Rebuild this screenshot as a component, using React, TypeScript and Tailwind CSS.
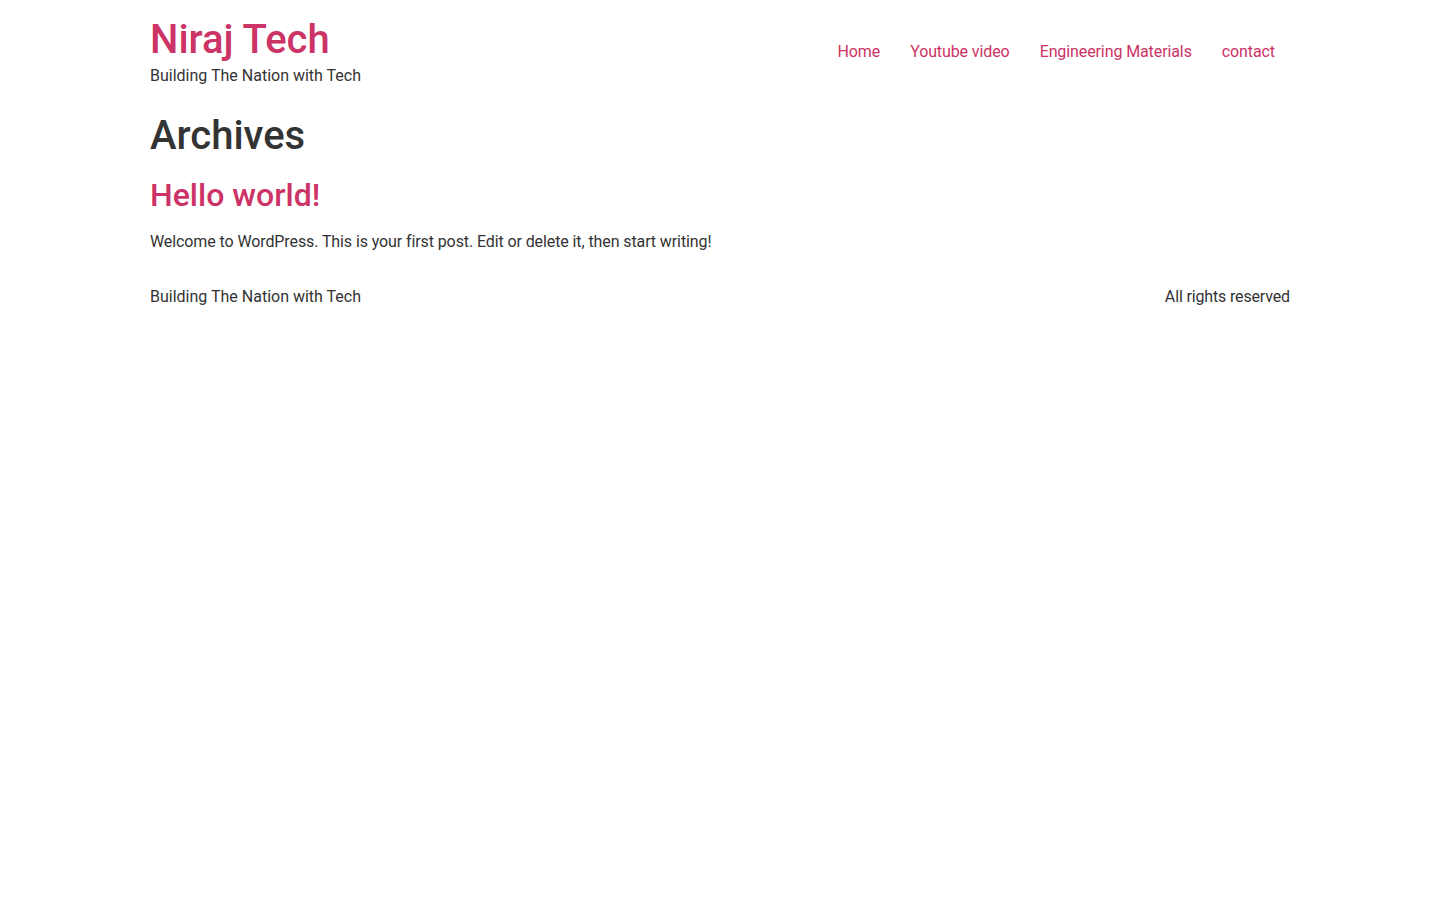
export default function App() {
  return (
    <div className="min-h-[900px] bg-white text-[#333] text-[16px] leading-[1.5]" style={{ fontFamily: "Roboto, 'Noto Sans', sans-serif" }}>
      <header className="w-[1140px] mx-auto py-4 flex items-center justify-between">
        <div>
          <h1 className="text-[40px] leading-[1.2] font-medium text-[#c36] m-0">Niraj Tech</h1>
          <p className="text-[16px] leading-[1.5] m-0">Building The Nation with Tech</p>
        </div>
        <nav className="flex tracking-[-0.1px]">
          {["Home", "Youtube video", "Engineering Materials", "contact"].map((t) => (
            <a key={t} href="#" className="px-[15px] py-[10px] text-[#c36]">{t}</a>
          ))}
        </nav>
      </header>
      <main className="w-[1140px] mx-auto">
        <h1 className="text-[40px] leading-[1.2] font-medium mt-2 mb-4">Archives</h1>
        <article>
          <h2 className="text-[32px] leading-[1.2] font-medium text-[#c36] mb-4">Hello world!</h2>
          <p className="mb-[14.4px] tracking-[-0.1px]">Welcome to WordPress. This is your first post. Edit or delete it, then start writing!</p>
        </article>
      </main>
      <footer className="w-[1140px] mx-auto py-4 flex justify-between">
        <p>Building The Nation with Tech</p>
        <p className="tracking-[-0.15px]">All rights reserved</p>
      </footer>
    </div>
  );
}
